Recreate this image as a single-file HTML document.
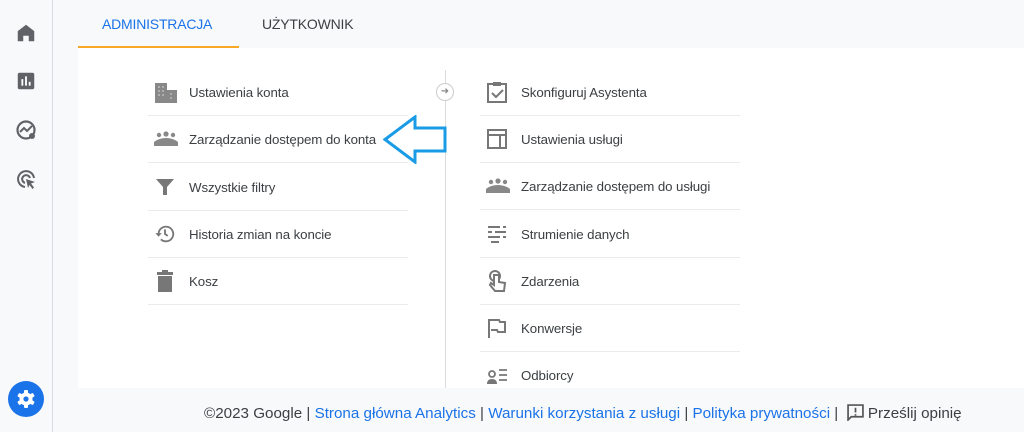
<!DOCTYPE html>
<html><head><meta charset="utf-8"><style>
*{margin:0;padding:0;box-sizing:border-box}
body{width:1024px;height:432px;background:#f8f9fa;font-family:"Liberation Sans",Arial,sans-serif;position:relative;overflow:hidden;color:#3c4043}
.side{position:absolute;left:0;top:0;width:53px;height:432px;background:#f8f9fa;border-right:1px solid #dadce0}
.panel{position:absolute;left:78px;top:48px;width:946px;height:340px;background:#fff}
.tab{position:absolute;top:16px;font-size:14px;letter-spacing:-0.2px}
.item{position:absolute;height:47px;font-size:13.3px;color:#3c4043;display:flex;align-items:center;letter-spacing:-0.1px}
.item.l{left:148px;width:260px}
.item.r{left:480px;width:260px}
.sep{border-bottom:1px solid #ebebeb}
.item svg{position:absolute;left:6px}
.item span{position:absolute;left:41px}
.foot{position:absolute;top:404px;left:204px;font-size:15.2px;color:#3c4043;white-space:nowrap}
.foot a{color:#1a73e8;text-decoration:none}
</style></head><body>
<div class="side">
<svg style="position:absolute;left:15px;top:22px" width="22" height="22" viewBox="0 0 24 24"><path d="M12 3L3 10v11h6v-6h6v6h6V10z" fill="#5f6368"/></svg>
<svg style="position:absolute;left:15px;top:70px" width="22" height="22" viewBox="0 0 24 24"><rect x="3" y="3" width="18" height="18" rx="2" fill="#5f6368"/><path d="M8 10v7M12 7v10M16 13v4" stroke="#fff" stroke-width="2"/></svg>
<svg style="position:absolute;left:14px;top:118px" width="24" height="24" viewBox="0 0 24 24"><circle cx="12" cy="12" r="8.5" fill="none" stroke="#5f6368" stroke-width="2.2"/><path d="M6 14l4-4 3 3 5-5" fill="none" stroke="#5f6368" stroke-width="2"/><circle cx="18" cy="18" r="3" fill="#5f6368"/></svg>
<svg style="position:absolute;left:14px;top:167px" width="24" height="24" viewBox="0 0 24 24"><path d="M11 20a8 8 0 1 1 9-9" fill="none" stroke="#5f6368" stroke-width="2"/><path d="M11 16a4 4 0 1 1 5-5" fill="none" stroke="#5f6368" stroke-width="2"/><path d="M12 12l9 3-4 1.5 3 4-1.5 1.5-3-4L14 21z" fill="#5f6368"/></svg>
<svg style="position:absolute;left:8px;top:381px" width="36" height="36" viewBox="0 0 36 36"><circle cx="18" cy="18" r="18" fill="#1a73e8"/><g fill="#fff"><circle cx="18" cy="18" r="6.5"/><rect x="16" y="9" width="4" height="18" rx="1"/><rect x="16" y="9" width="4" height="18" rx="1" transform="rotate(60 18 18)"/><rect x="16" y="9" width="4" height="18" rx="1" transform="rotate(120 18 18)"/></g><circle cx="18" cy="18" r="2.6" fill="#1a73e8"/></svg>
</div>
<div class="tab" style="left:102px;color:#1a73e8">ADMINISTRACJA</div>
<div class="tab" style="left:262px;color:#3c4043">UŻYTKOWNIK</div>
<div style="position:absolute;left:78px;top:46px;width:161px;height:2px;background:#f9a825"></div>
<div class="panel"></div>
<div style="position:absolute;left:445px;top:70px;width:1px;height:318px;background:#dadce0"></div>
<div style="position:absolute;left:436px;top:83px;width:18px;height:18px;border-radius:50%;border:1px solid #ccc;background:#fff;font-size:10px;color:#888;text-align:center;line-height:16px">➜</div>

<div class="item l sep" style="top:69px"><svg width="24" height="22" viewBox="0 0 24 22"><path d="M1 2h12v20H1zM13 9h10v13H13z" fill="#888"/><path d="M4 6h2M8 6h2M4 10h2M8 10h2M4 14h2M8 14h2M16 13h2M16 17h2" stroke="#bbb" stroke-width="1.5"/></svg><span>Ustawienia konta</span></div>
<div class="item l sep" style="top:116px"><svg width="24" height="16" viewBox="0 0 24 16"><circle cx="5" cy="4" r="2.2" fill="#888"/><circle cx="12" cy="3" r="2.6" fill="#888"/><circle cx="19" cy="4" r="2.2" fill="#888"/><path d="M0 15v-4q5-4 12-4t12 4v4z" fill="#888"/></svg><span>Zarządzanie dostępem do konta</span></div>
<div class="item l sep" style="top:164px"><svg width="22" height="20" viewBox="0 0 22 20"><path d="M2 2h18l-7 8v8h-4v-8z" fill="#777"/></svg><span>Wszystkie filtry</span></div>
<div class="item l sep" style="top:211px"><svg width="22" height="22" viewBox="0 0 24 24"><path d="M5 12a8 8 0 1 1 2.5 5.8" fill="none" stroke="#777" stroke-width="2"/><path d="M1.5 11h7l-3.5 4z" fill="#777"/><path d="M12 7v5l3 2" fill="none" stroke="#777" stroke-width="2"/></svg><span>Historia zmian na koncie</span></div>
<div class="item l sep" style="top:258px"><svg width="22" height="24" viewBox="0 0 22 24"><path d="M3 3h16v3H3zM8 1h6v2H8zM4 7h14v16H4z" fill="#777"/></svg><span>Kosz</span></div>

<svg style="position:absolute;left:383px;top:115px" width="64" height="49" viewBox="0 0 64 49"><path d="M2 24.5L32 2v11h30v23H32v11z" fill="#fff" stroke="#1a9be6" stroke-width="3" stroke-linejoin="miter"/></svg>

<div class="item r sep" style="top:69px"><svg width="22" height="22" viewBox="0 0 22 22"><rect x="2" y="3" width="18" height="18" fill="none" stroke="#777" stroke-width="2"/><rect x="7" y="1" width="8" height="4" fill="#777"/><path d="M6 12l4 4 7-7" fill="none" stroke="#777" stroke-width="2"/></svg><span>Skonfiguruj Asystenta</span></div>
<div class="item r sep" style="top:116px"><svg width="22" height="22" viewBox="0 0 22 22"><rect x="2" y="2" width="18" height="18" fill="none" stroke="#777" stroke-width="2"/><path d="M2 7h18M14 7v13" stroke="#777" stroke-width="2"/></svg><span>Ustawienia usługi</span></div>
<div class="item r sep" style="top:163px"><svg width="24" height="16" viewBox="0 0 24 16"><circle cx="5" cy="4" r="2.2" fill="#888"/><circle cx="12" cy="3" r="2.6" fill="#888"/><circle cx="19" cy="4" r="2.2" fill="#888"/><path d="M0 15v-4q5-4 12-4t12 4v4z" fill="#888"/></svg><span>Zarządzanie dostępem do usługi</span></div>
<div class="item r sep" style="top:211px"><svg width="22" height="20" viewBox="0 0 22 20"><path d="M2 3h12M17 3h3M2 8h4M9 8h11M2 13h12M17 13h3M5 18h8" stroke="#777" stroke-width="2"/></svg><span>Strumienie danych</span></div>
<div class="item r sep" style="top:258px"><svg width="22" height="24" viewBox="0 0 22 24"><circle cx="9" cy="7" r="5" fill="none" stroke="#777" stroke-width="2"/><path d="M8 6v10l-3-2-1 2 5 6h9l1-8-6-1V6z" fill="#fff" stroke="#777" stroke-width="2"/></svg><span>Zdarzenia</span></div>
<div class="item r sep" style="top:305px"><svg width="22" height="22" viewBox="0 0 22 22"><path d="M3 21V3h10l1 2h5v10h-7l-1-2H5" fill="none" stroke="#777" stroke-width="2"/></svg><span>Konwersje</span></div>
<div class="item r" style="top:352px"><svg width="22" height="20" viewBox="0 0 22 20"><circle cx="6" cy="8" r="3" fill="none" stroke="#777" stroke-width="1.8"/><path d="M1 18q0-5 5-5t5 5z" fill="#777"/><path d="M13 4h8M13 9h8M13 14h8" stroke="#777" stroke-width="1.8"/></svg><span>Odbiorcy</span></div>

<div class="foot">©2023 Google | <a>Strona główna Analytics</a> | <a>Warunki korzystania z usługi</a> | <a>Polityka prywatności</a> | &nbsp;<svg style="vertical-align:-3px" width="17" height="17" viewBox="0 0 16 16"><path d="M1 1h14v11H4l-3 3z" fill="none" stroke="#555" stroke-width="1.6"/><path d="M8 3.5v4.5M8 9.5v1.5" stroke="#555" stroke-width="1.6"/></svg> Prześlij opinię</div>
</body></html>
